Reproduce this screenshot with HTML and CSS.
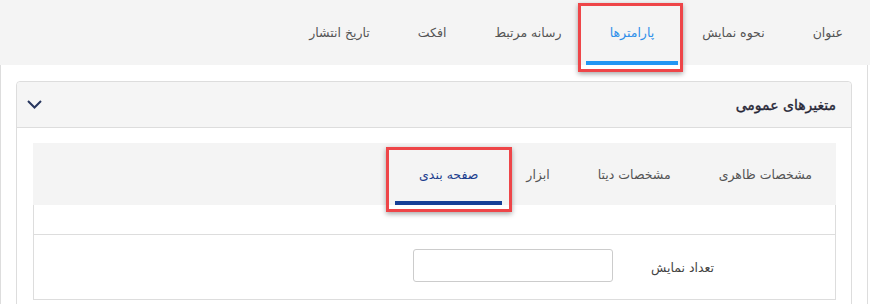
FILE: index.html
```html
<html dir="rtl">
  <head>
    <meta charset="utf-8">
    <link rel="stylesheet" href="styles.css">
  </head>
  <body>
    <nav class="tabs main-tabs">
      <a class="tab">عنوان</a>
      <a class="tab">نحوه نمایش</a>
      <a class="tab active marked">پارامترها</a>
      <a class="tab">رسانه مرتبط</a>
      <a class="tab">افکت</a>
      <a class="tab">تاریخ انتشار</a>
    </nav>

    <div class="panel">
      <div class="card">
        <div class="card-head">
          <h3>متغیرهای عمومی</h3>
          <svg class="chevron" width="15" height="9" viewBox="0 0 15 9">
            <path d="M1 1 L7.5 7.5 L14 1" fill="none" stroke="#27365e" stroke-width="2"/>
          </svg>
        </div>
        <div class="card-body">
          <nav class="tabs sub-tabs">
            <a class="tab">مشخصات ظاهری</a>
            <a class="tab">مشخصات دیتا</a>
            <a class="tab">ابزار</a>
            <a class="tab active marked">صفحه بندی</a>
          </nav>
          <div class="pane">
            <div class="pane-top"></div>
            <div class="field">
              <label>تعداد نمایش</label>
              <input type="text">
            </div>
          </div>
        </div>
      </div>
    </div>
  </body>
</html>
```

FILE: styles.css
```css
body { margin: 0; width: 870px; height: 304px; font: 12.5px "DejaVu Sans", sans-serif; color: #555; overflow: hidden; }

.tabs { display: flex; background: #f4f4f4; }
.tab { position: relative; display: flex; align-items: center; padding: 0 24px; color: #555; cursor: pointer; }
.tab.active::before { content: ""; position: absolute; left: 0; right: 0; bottom: 0; height: 4px; }

.main-tabs { height: 65px; padding-right: 3px; }
.main-tabs .tab { padding-bottom: 1px; }
.main-tabs .tab.active { color: #2f8fea; }
.main-tabs .tab.active::before { background: #2196f3; }
.main-tabs .marked::after { content: ""; position: absolute; top: 3px; bottom: -7px; left: -8px; right: -5px; border: 3px solid #ee4548; box-shadow: 0 2px 5px rgba(0,0,0,.35); z-index: 2; }

.panel { margin-right: 2px; border: 1px solid #ddd; border-top: 0; border-bottom: 0; padding: 16px 15px 0; height: 239px; box-sizing: border-box; overflow: hidden; }

.card { border: 1px solid #ddd; border-radius: 4px; padding-bottom: 20px; }
.card-head { display: flex; align-items: center; justify-content: space-between; height: 45px; padding: 0 15px 0 10px; background: #f5f5f5; border-bottom: 1px solid #ddd; border-radius: 4px 4px 0 0; }
.card-head h3 { margin: 0; font-size: 14px; font-weight: normal; color: #262636; -webkit-text-stroke: 0.35px #262636; }
.chevron { display: block; }
.card-body { padding: 15px 15px 0 16px; }

.sub-tabs { height: 62px; }
.sub-tabs .tab.active { color: #1d3f8e; }
.sub-tabs .tab.active::before { background: #163f96; }
.sub-tabs .marked::after { content: ""; position: absolute; top: 4px; bottom: -7px; left: -9px; right: -10px; border: 3px solid #ee4548; box-shadow: 0 2px 5px rgba(0,0,0,.35); z-index: 2; }

.pane { border: 1px solid #ddd; border-top: 0; }
.pane-top { height: 29px; border-bottom: 1px solid #ddd; }
.field { display: flex; align-items: center; height: 64px; padding-right: 121px; }
.field label { width: 101px; color: #444; }
.field input { width: 200px; height: 33px; box-sizing: border-box; border: 1px solid #ccc; border-radius: 3px; margin-top: -3px; }
```
